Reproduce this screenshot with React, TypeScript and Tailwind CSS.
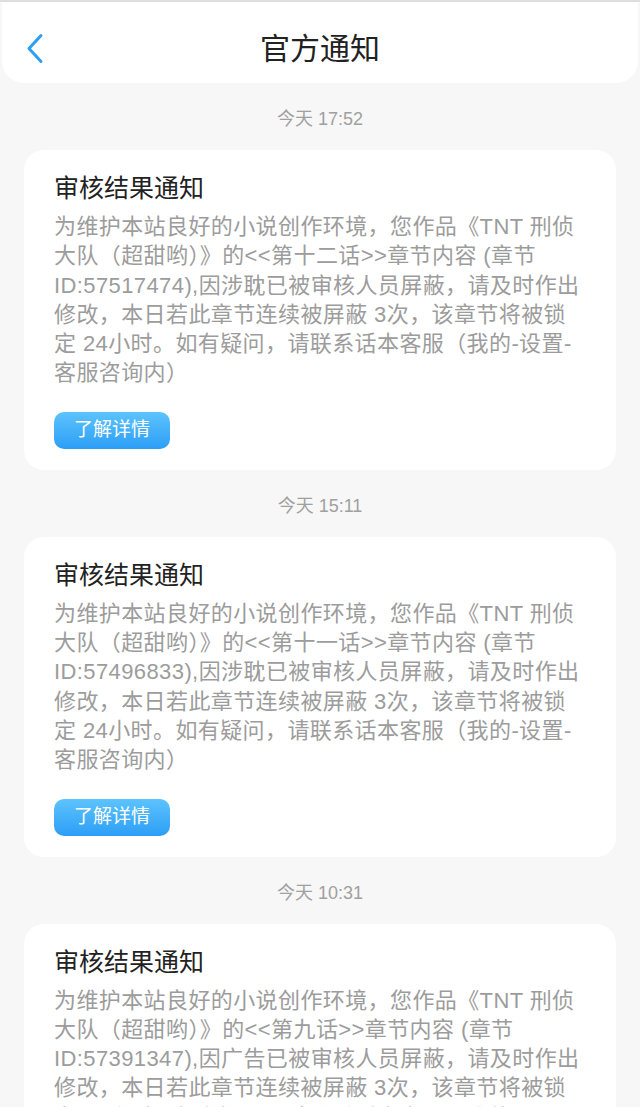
import React from 'react';

type Notice = {
  time: string;
  lines: string[];
};

const notices: Notice[] = [
  {
    time: '今天 17:52',
    lines: [
      '为维护本站良好的小说创作环境，您作品《TNT 刑侦',
      '大队（超甜哟）》的<<第十二话>>章节内容 (章节',
      'ID:57517474),因涉耽已被审核人员屏蔽，请及时作出',
      '修改，本日若此章节连续被屏蔽 3次，该章节将被锁',
      '定 24小时。如有疑问，请联系话本客服（我的-设置-',
      '客服咨询内）',
    ],
  },
  {
    time: '今天 15:11',
    lines: [
      '为维护本站良好的小说创作环境，您作品《TNT 刑侦',
      '大队（超甜哟）》的<<第十一话>>章节内容 (章节',
      'ID:57496833),因涉耽已被审核人员屏蔽，请及时作出',
      '修改，本日若此章节连续被屏蔽 3次，该章节将被锁',
      '定 24小时。如有疑问，请联系话本客服（我的-设置-',
      '客服咨询内）',
    ],
  },
  {
    time: '今天 10:31',
    lines: [
      '为维护本站良好的小说创作环境，您作品《TNT 刑侦',
      '大队（超甜哟）》的<<第九话>>章节内容 (章节',
      'ID:57391347),因广告已被审核人员屏蔽，请及时作出',
      '修改，本日若此章节连续被屏蔽 3次，该章节将被锁',
      '定 24小时。如有疑问，请联系话本客服（我的-设置-',
      '客服咨询内）',
    ],
  },
];

const BackIcon: React.FC = () => (
  <svg width="18" height="31" viewBox="0 0 18 31" fill="none">
    <path d="M15 2.5 L3 15.5 L15 28.5" stroke="#2b9ff3" strokeWidth="3" strokeLinecap="round" strokeLinejoin="round" />
  </svg>
);

const NoticeCard: React.FC<{ notice: Notice }> = ({ notice }) => (
  <div>
    <div className="pt-[26px] pb-[21px] text-center text-[18px] leading-[20px] text-[#a0a0a0]">{notice.time}</div>
    <div className="mx-[24px] bg-white rounded-[20px] px-[30px] pt-[21px] pb-[21px]">
      <h3 className="text-[25px] leading-[34px] text-[#222222]">审核结果通知</h3>
      <p className="mt-[7px] text-[22px] leading-[29.3px] tracking-[0.4px] text-[#9c9c9c]">
        {notice.lines.map((l, i) => (
          <span key={i} className="block whitespace-nowrap">
            {l}
          </span>
        ))}
      </p>
      <button className="mt-[24px] w-[116px] h-[37px] rounded-[10px] bg-linear-to-b from-[#5cc3fd] to-[#2b9ef6] text-white text-[19px] flex items-center justify-center">
        了解详情
      </button>
    </div>
  </div>
);

export default function App() {
  return (
    <div className="min-h-screen bg-[#f7f7f7] font-['Liberation_Sans','Noto_Sans_CJK_SC',sans-serif]">
      <div className="h-[2px] bg-[#dedede]" />
      <header className="mx-[2px] h-[81px] bg-white rounded-b-[22px] grid grid-cols-[80px_1fr_80px] items-center pt-[12px]">
        <div className="pl-[24px] flex items-center">
          <BackIcon />
        </div>
        <h1 className="text-center text-[30px] leading-[40px] text-[#222222]">官方通知</h1>
        <div />
      </header>
      {notices.map((n, i) => (
        <NoticeCard key={i} notice={n} />
      ))}
    </div>
  );
}
